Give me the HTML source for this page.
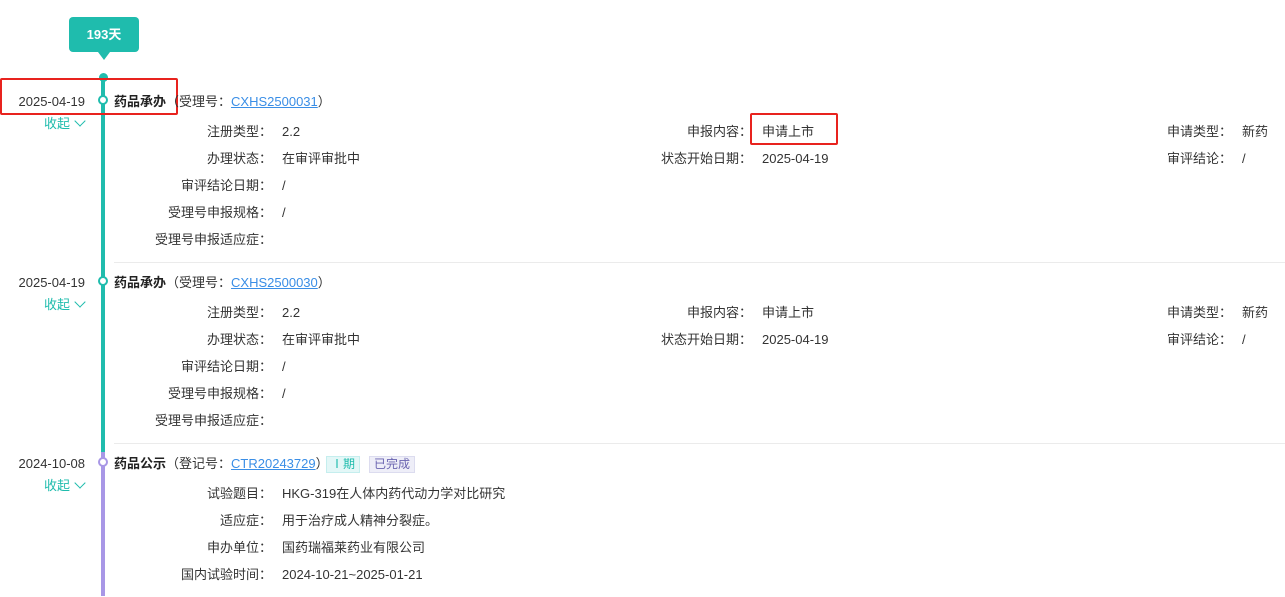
<!DOCTYPE html>
<html><head><meta charset="utf-8"><style>
body{margin:0;width:1285px;height:596px;background:#fff;position:relative;overflow:hidden;font-family:"Liberation Sans","Noto Sans CJK SC",sans-serif;font-size:13px;color:#333}
div,span{position:absolute;line-height:18px;white-space:nowrap}
#w{left:0;top:1px;width:1285px;height:596px}
.l1{right:1013px;text-align:right}.l2{right:533px;text-align:right}.l3{right:53px;text-align:right}
.v1{left:282px}.v2{left:762px}.v3{left:1242px}
.d{right:1200px;text-align:right;color:#333}
.c{left:44px;color:#1fbcad}
.c i{display:inline-block;width:7px;height:7px;border-right:1.3px solid #1fbcad;border-bottom:1.3px solid #1fbcad;transform:rotate(45deg);margin-left:6px;position:relative;top:-3px}
.t{left:114px}.t b{font-weight:bold;color:#222}.t a{color:#3a8ee6;text-decoration:underline}
.dot{width:6px;height:6px;border:2px solid #1fbcad;border-radius:50%;background:#fff;left:98px}
.sep{left:114px;right:0;height:1px;background:#ebebeb}
.red{border:2px solid #e8231e;border-radius:2px}
</style></head><body>
<div style="left:101px;top:76px;width:4px;height:376px;background:#1fbcad"></div>
<div style="left:101px;top:452px;width:4px;height:144px;background:#a897e6"></div>
<div style="left:99px;top:73px;width:9px;height:9px;border-radius:50%;background:#1fbcad"></div>
<div style="left:69px;top:17px;width:70px;height:35px;background:#1fbcad;border-radius:4px;color:#fff;font-weight:bold;text-align:center;line-height:35px">193天</div>
<div style="left:98px;top:52px;width:0;height:0;border-left:6px solid transparent;border-right:6px solid transparent;border-top:8px solid #1fbcad"></div>
<div class="red" style="left:0;top:78px;width:174px;height:33px"></div>
<div class="red" style="left:750px;top:113px;width:84px;height:28px"></div>
<div id="w">
<div class="d" style="top:92px">2025-04-19</div>
<div class="dot" style="top:94px"></div>
<div class="t" style="top:92px"><b>药品承办</b>（受理号：<a>CXHS2500031</a>）</div>
<div class="c" style="top:114px">收起<i></i></div>
<div class="l1" style="top:122px">注册类型：</div><div class="v1" style="top:122px">2.2</div>
<div class="l2" style="top:122px">申报内容：</div><div class="v2" style="top:122px">申请上市</div>
<div class="l3" style="top:122px">申请类型：</div><div class="v3" style="top:122px">新药</div>
<div class="l1" style="top:149px">办理状态：</div><div class="v1" style="top:149px">在审评审批中</div>
<div class="l2" style="top:149px">状态开始日期：</div><div class="v2" style="top:149px">2025-04-19</div>
<div class="l3" style="top:149px">审评结论：</div><div class="v3" style="top:149px">/</div>
<div class="l1" style="top:176px">审评结论日期：</div><div class="v1" style="top:176px">/</div>
<div class="l1" style="top:203px">受理号申报规格：</div><div class="v1" style="top:203px">/</div>
<div class="l1" style="top:230px">受理号申报适应症：</div>
<div class="sep" style="top:261px"></div>

<div class="d" style="top:273px">2025-04-19</div>
<div class="dot" style="top:275px"></div>
<div class="t" style="top:273px"><b>药品承办</b>（受理号：<a>CXHS2500030</a>）</div>
<div class="c" style="top:295px">收起<i></i></div>
<div class="l1" style="top:303px">注册类型：</div><div class="v1" style="top:303px">2.2</div>
<div class="l2" style="top:303px">申报内容：</div><div class="v2" style="top:303px">申请上市</div>
<div class="l3" style="top:303px">申请类型：</div><div class="v3" style="top:303px">新药</div>
<div class="l1" style="top:330px">办理状态：</div><div class="v1" style="top:330px">在审评审批中</div>
<div class="l2" style="top:330px">状态开始日期：</div><div class="v2" style="top:330px">2025-04-19</div>
<div class="l3" style="top:330px">审评结论：</div><div class="v3" style="top:330px">/</div>
<div class="l1" style="top:357px">审评结论日期：</div><div class="v1" style="top:357px">/</div>
<div class="l1" style="top:384px">受理号申报规格：</div><div class="v1" style="top:384px">/</div>
<div class="l1" style="top:411px">受理号申报适应症：</div>
<div class="sep" style="top:442px"></div>

<div class="d" style="top:454px">2024-10-08</div>
<div class="dot" style="top:456px;border-color:#a897e6"></div>
<div class="t" style="top:454px"><b>药品公示</b>（登记号：<a>CTR20243729</a>）</div>
<div style="left:326px;top:455px;width:32px;height:15px;line-height:15px;background:#e3f7f7;border:1px solid #c5eeee;color:#1fbcad;text-align:center;font-size:12px">Ⅰ期</div>
<div style="left:369px;top:455px;width:44px;height:15px;line-height:15px;background:#eeeef8;border:1px solid #dcdcef;color:#6a64b0;text-align:center;font-size:12px">已完成</div>
<div class="c" style="top:476px">收起<i></i></div>
<div class="l1" style="top:484px">试验题目：</div><div class="v1" style="top:484px">HKG-319在人体内药代动力学对比研究</div>
<div class="l1" style="top:511px">适应症：</div><div class="v1" style="top:511px">用于治疗成人精神分裂症。</div>
<div class="l1" style="top:538px">申办单位：</div><div class="v1" style="top:538px">国药瑞福莱药业有限公司</div>
<div class="l1" style="top:565px">国内试验时间：</div><div class="v1" style="top:565px">2024-10-21~2025-01-21</div>
</div>
</body></html>
